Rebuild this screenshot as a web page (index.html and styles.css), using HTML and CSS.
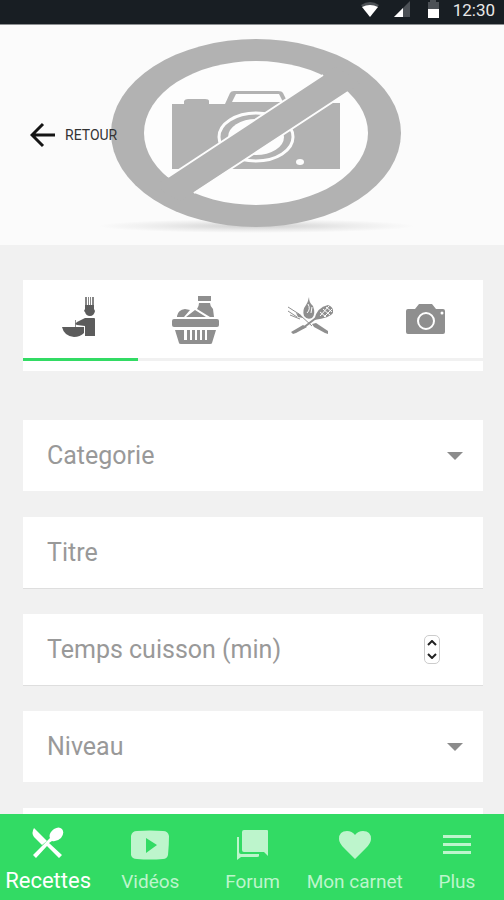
FILE: index.html
```html
<!DOCTYPE html>
<html lang="fr">
<head>
<meta charset="utf-8">
<meta name="viewport" content="width=device-width, initial-scale=1">
<title>Recettes</title>
<link rel="stylesheet" href="styles.css">
</head>
<body>
<div class="app">
  <div class="status">
    <svg class="status-icons" viewBox="0 0 84 20" aria-hidden="true">
      <path d="M0 5Q9-1 18 5L9 16Z" fill="#4c5156"/>
      <path d="M1 7Q9 3 17 7L9 17Z" fill="#fff"/>
      <path d="M49 1V17H33Z" fill="#4c5156"/>
      <path d="M42 8V17H33Z" fill="#fff"/>
      <path d="M69 0H75V2H78V9H67V2H69Z" fill="#4c5156"/>
      <path d="M67 9H78V18H67Z" fill="#fff"/>
    </svg>
    <time>12:30</time>
  </div>

  <header class="hero">
    <svg class="hero-art" viewBox="0 0 504 220" aria-hidden="true">
      <defs>
        <radialGradient id="shade">
          <stop offset="0" stop-color="#cfcfcf"/>
          <stop offset=".6" stop-color="#ececec"/>
          <stop offset="1" stop-color="#fbfbfb"/>
        </radialGradient>
        <clipPath id="disc"><ellipse cx="256" cy="108" rx="128" ry="84"/></clipPath>
      </defs>
      <ellipse cx="256" cy="201" rx="158" ry="7" fill="url(#shade)"/>
      <ellipse cx="256" cy="108" rx="145" ry="94" fill="#b2b2b2"/>
      <ellipse cx="256" cy="108" rx="112" ry="72" fill="#fdfdfd"/>
      <path d="M172 79H184V76Q185 74 188 74H205Q209 74 209 76V79H225L230 68Q231 66 234 66H278Q282 66 283 68L288 78H340V144H172Z" fill="#b2b2b2"/>
      <path d="M232 77L236 69H279L283 77Z" fill="#fdfdfd"/>
      <ellipse cx="256" cy="112" rx="37" ry="24" fill="none" stroke="#fdfdfd" stroke-width="3"/>
      <ellipse cx="256" cy="112" rx="28" ry="18" fill="#fdfdfd"/>
      <ellipse cx="300" cy="137" rx="4" ry="3" fill="#fdfdfd"/>
      <g clip-path="url(#disc)">
        <path d="M384 10L107 192L132 208L409 27Z" fill="#b2b2b2"/>
      </g>
      <path d="M323 50L168 152M348 67L194 168" stroke="#fdfdfd" stroke-width="2"/>
    </svg>
    <a class="back" href="#">
      <svg viewBox="0 0 26 26" aria-hidden="true"><path d="M13 2L2 13L13 24M2 13H25" fill="none" stroke="#151515" stroke-width="3"/></svg>
      RETOUR
    </a>
  </header>

  <main class="content">
    <nav class="steps" aria-label="Étapes">
      <button class="step is-active" type="button" aria-label="Préparation">
        <svg viewBox="0 0 48 52" aria-hidden="true" fill="#5c5c5c">
          <path d="M28 2H30V11H28ZM31 2H32V11H31ZM33 2H34V11H33ZM35 2H37V11H35Z" opacity=".75"/>
          <path d="M28 10H37V14L38 16Q37 21 33 21Q29 21 28 17L27 16L28 14Z"/>
          <path d="M28 23H37Q38 23 38 24V41H28V31L20 30L18 29L20 27Z"/>
          <path d="M18 25H19V33H18Z" opacity=".7"/>
          <path d="M5 32H27V38Q23 42 17 42Q7 41 5 32Z"/>
        </svg>
      </button>
      <button class="step" type="button" aria-label="Ingrédients">
        <svg viewBox="0 0 48 52" aria-hidden="true" fill="#8f8f8f">
          <path d="M26 1H39V6H26ZM27 8H38Q38 11 41 14L42 22H38L25 14Q27 11 27 8Z"/>
          <path d="M5 21Q6 15 13 14L18 15L12 22H5ZM14 22L23 15L34 22Z"/>
          <rect x="0" y="24" width="47" height="8" rx="2"/>
          <path fill-rule="evenodd" d="M3 35H44L40 48Q40 49 38 49H9Q7 49 7 48ZM12 35V45H15V35ZM18 35V45H20V35ZM23 35V45H25V35ZM28 35V45H30V35ZM33 35V45H35V35Z"/>
        </svg>
      </button>
      <button class="step" type="button" aria-label="Cuisson">
        <svg viewBox="0 0 48 52" aria-hidden="true" fill="#8f8f8f">
          <path d="M22 2Q22 8 26 11Q29 19 25 23Q20 25 17 21Q15 15 19 10Q21 7 22 2Z"/>
          <path d="M21 9Q24 14 20 18M25 12L24 18" fill="none" stroke="#fff"/>
          <path d="M1 12L12 19M1 16L10 22M3 20L13 24M13 20L25 31" fill="none" stroke="#8f8f8f"/>
          <path d="M9 18L13 19L16 23L11 22Z"/>
          <path d="M27 25Q30 12 41 10Q47 12 46 18Q43 23 27 25Z"/>
          <path d="M33 17L39 22M36 14L43 20M39 12L45 17M33 21L42 11M37 22L45 14" stroke="#fff"/>
          <path d="M29 23L16 33" stroke="#8f8f8f" stroke-width="2"/>
          <path d="M16 30L20 32L9 38L6 39L4 37ZM25 29L29 28L41 36V39L38 38L27 32Z"/>
        </svg>
      </button>
      <button class="step" type="button" aria-label="Photo">
        <svg viewBox="0 0 48 52" aria-hidden="true">
          <path d="M17 9H30L34 14H41Q43 14 43 16V37Q43 39 41 39H6Q4 39 4 37V16Q4 14 6 14H13Z" fill="#8f8f8f"/>
          <circle cx="24" cy="26" r="8" fill="none" stroke="#fff" stroke-width="2"/>
          <circle cx="40" cy="18" r="1.5" fill="#fff"/>
        </svg>
      </button>
    </nav>

    <form class="fields">
      <div class="field">
        <select class="control" aria-label="Categorie"><option>Categorie</option></select>
        <svg class="caret" viewBox="0 0 16 8" aria-hidden="true"><path d="M0 0H16L8 8Z" fill="#8c8c8c"/></svg>
      </div>
      <div class="field field-line">
        <input class="control" type="text" placeholder="Titre" aria-label="Titre">
      </div>
      <div class="field field-line">
        <input class="control" type="number" placeholder="Temps cuisson (min)" aria-label="Temps cuisson (min)">
        <div class="stepper">
          <button type="button" aria-label="Augmenter"><svg viewBox="0 0 10 6"><path d="M1 5L5 1L9 5"/></svg></button>
          <button type="button" aria-label="Diminuer"><svg viewBox="0 0 10 6"><path d="M1 1L5 5L9 1"/></svg></button>
        </div>
      </div>
      <div class="field">
        <select class="control" aria-label="Niveau"><option>Niveau</option></select>
        <svg class="caret" viewBox="0 0 16 8" aria-hidden="true"><path d="M0 0H16L8 8Z" fill="#8c8c8c"/></svg>
      </div>
      <div class="field"></div>
    </form>
  </main>

  <footer class="tabbar">
    <nav class="tabs" aria-label="Navigation">
      <a class="tab is-active" href="#">
        <svg viewBox="0 0 40 32" aria-hidden="true" fill="currentColor">
          <path d="M6 1L19 14L14 18L6 10Q3 6 6 1Z"/>
          <path d="M22 11Q20 7 26 2Q31-1 34 2Q37 6 33 11Q29 15 24 14L21 16L34 28L31 31L19 19L8 31L5 28Z"/>
        </svg>
        Recettes
      </a>
      <a class="tab" href="#">
        <svg viewBox="0 0 40 32" aria-hidden="true" fill="currentColor"><path fill-rule="evenodd" d="M7 3Q20 2 33 3Q38 3 39 8Q39 17 38 27Q37 31 33 31Q20 32 7 31Q2 31 1 27V8Q2 3 7 3ZM16 10V25L27 17Z"/></svg>
        Vidéos
      </a>
      <a class="tab" href="#">
        <svg viewBox="0 0 40 32" aria-hidden="true" fill="currentColor"><path d="M11 2H34Q35 2 35 3V28L31 24H11Q9 24 9 22V4Q9 2 11 2ZM4 9H6V24Q6 26 8 26H26V28Q26 29 24 29H8L4 32Z"/></svg>
        Forum
      </a>
      <a class="tab" href="#">
        <svg viewBox="0 0 40 32" aria-hidden="true" fill="currentColor"><path d="M20 31L9 20Q4 15 4 11Q4 3 12 3Q17 3 20 7Q23 3 28 3Q36 3 36 11Q36 15 31 20Z"/></svg>
        Mon carnet
      </a>
      <a class="tab" href="#">
        <svg viewBox="0 0 40 32" aria-hidden="true" fill="currentColor"><path d="M6 7H34V10H6ZM6 15H34V18H6ZM6 23H34V26H6Z"/></svg>
        Plus
      </a>
    </nav>
  </footer>
</div>
</body>
</html>
```
FILE: styles.css
```css
* {
  box-sizing: border-box;
}

body {
  margin: 0;
  font-family: Roboto, "Liberation Sans", sans-serif;
  background: #f1f1f1;
}

.app {
  display: flex;
  flex-direction: column;
  height: 100vh;
  overflow: hidden;
}

.status {
  display: flex;
  flex: none;
  align-items: center;
  justify-content: flex-end;
  gap: 8px;
  height: 25px;
  padding: 0 9px 4px;
  border-bottom: 1px solid #8d9092;
  background: #181e23;
  color: #e8e8e8;
  font-size: 17px;
}

.status-icons {
  width: 84px;
  height: 20px;
}

.hero {
  display: grid;
  flex: none;
  align-items: center;
  background: #fbfbfb;
}

.hero-art,
.back {
  grid-area: 1 / 1;
}

.hero-art {
  display: block;
  width: 100%;
}

.back {
  display: flex;
  align-items: center;
  justify-self: start;
  gap: 9px;
  margin-left: 30px;
  color: #333;
  font-size: 14px;
  text-decoration: none;
}

.back svg {
  width: 26px;
  height: 26px;
}

.content {
  flex: 1;
  min-height: 0;
  overflow: hidden;
  padding: 35px 21px 0 23px;
}

.steps {
  display: flex;
  margin-bottom: 49px;
  padding-bottom: 10px;
  background: #fff;
}

.step {
  display: flex;
  flex: 1;
  justify-content: center;
  height: 81px;
  padding: 15px 0 0;
  border: 0;
  border-bottom: 3px solid #f1f1f1;
  background: none;
}

.step.is-active {
  border-color: #32db64;
}

.step svg {
  width: 48px;
  height: 52px;
}

.fields {
  display: grid;
  gap: 26px;
}

.field {
  display: flex;
  align-items: center;
  height: 71px;
  padding: 0 20px 0 24px;
  background: #fff;
}

.field-line {
  box-shadow: 0 1px #dedede;
}

.control {
  flex: 1;
  min-width: 0;
  height: 100%;
  padding: 0;
  border: 0;
  outline: 0;
  appearance: none;
  background: none;
  color: #999;
  font: 25px Roboto, "Liberation Sans", sans-serif;
}

.control::placeholder {
  color: #999;
}

.control[type="number"] {
  appearance: textfield;
}

.caret {
  width: 16px;
  height: 8px;
}

.stepper {
  display: grid;
  width: 16px;
  height: 29px;
  margin-right: 23px;
  border: 1px solid #ccc;
  border-radius: 5px;
}

.stepper button {
  display: grid;
  place-items: center;
  padding: 0;
  border: 0;
  background: none;
}

.stepper svg {
  width: 10px;
  height: 6px;
  fill: none;
  stroke: #222;
  stroke-width: 2;
}

.tabbar {
  flex: none;
  overflow: hidden;
  background: #32db64;
}

.tabs {
  display: flex;
  height: 86px;
  margin: 0 -4px 0 -3px;
}

.tab {
  display: flex;
  flex: 1 0 0;
  flex-direction: column;
  align-items: center;
  justify-content: space-between;
  padding: 14px 0 6px;
  color: #bdf5cc;
  font-size: 19px;
  line-height: 24px;
  text-decoration: none;
  white-space: nowrap;
}

.tab.is-active {
  padding: 13px 0 7px;
  color: #fff;
  font-size: 22px;
}

.tab svg {
  width: 40px;
  height: 32px;
}
```
